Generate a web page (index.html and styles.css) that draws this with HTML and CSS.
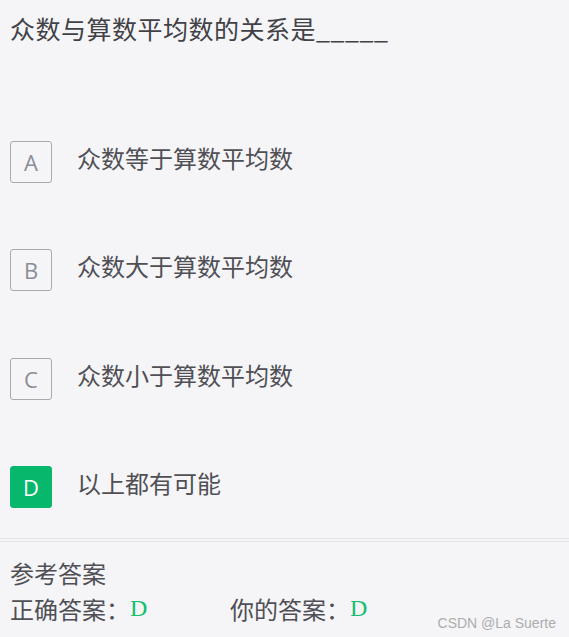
FILE: index.html
```html
<!DOCTYPE html>
<html>

<head>
    <meta charset="utf-8">
    <title>单选题</title>
    <link rel="stylesheet" href="styles.css">
</head>

<body>
    <div class="question">众数与算数平均数的关系是_____</div>

    <div class="options">
        <div class="option">
            <div class="option-key">A</div>
            <div class="option-text">众数等于算数平均数</div>
        </div>
        <div class="option">
            <div class="option-key">B</div>
            <div class="option-text">众数大于算数平均数</div>
        </div>
        <div class="option">
            <div class="option-key">C</div>
            <div class="option-text">众数小于算数平均数</div>
        </div>
        <div class="option">
            <div class="option-key selected">D</div>
            <div class="option-text">以上都有可能</div>
        </div>
    </div>

    <!-- Answer section -->
    <div class="answer">
        <div class="answer-title">参考答案</div>
        <div class="answer-row">
            <div class="answer-item">正确答案：<span class="answer-value">D</span></div>
            <div class="answer-item">你的答案：<span class="answer-value">D</span></div>
        </div>
    </div>

    <div class="watermark">CSDN @La Suerte</div>
</body>

</html>
```

FILE: styles.css
```css
body {
    margin: 0;
    padding: 10px 0 0 0;
    background: #f5f5f7;
    font-family: "Noto Sans CJK SC", "Noto Sans", sans-serif;
    color: #4a4a4f;
    width: 569px;
    height: 637px;
    box-sizing: border-box;
    overflow: hidden;
    position: relative;
}

.question {
    padding-left: 10px;
    font-size: 25px;
    line-height: 36px;
    letter-spacing: 0.5px;
    color: #414146;
}

.options {
    display: flex;
    flex-direction: column;
    gap: 66.3px;
    margin-top: 95px;
    padding-left: 10px;
}

.option {
    display: flex;
    align-items: flex-start;
}

.option-key {
    width: 42px;
    height: 42px;
    box-sizing: border-box;
    border: 1px solid #a8aab2;
    border-radius: 3px;
    display: flex;
    align-items: center;
    justify-content: center;
    font-family: "Open Sans", "Noto Sans", sans-serif;
    font-size: 22px;
    color: #8a8d96;
    flex-shrink: 0;
}

.option-key.selected {
    background: #07b86c;
    border-color: #07b86c;
    color: white;
}

.option-text {
    margin-left: 25px;
    font-size: 24px;
    line-height: 34px;
    color: #4f4f55;
}

/* Answer */
.answer {
    margin-top: 30px;
    border-top: 4px double #e2e2e8;
    padding: 13px 10px 0 10px;
    font-size: 24px;
    line-height: 36px;
    color: #4f4f55;
}

.answer-row {
    display: flex;
}

.answer-item {
    width: 220px;
}

.answer-value {
    font-family: "Liberation Serif", serif;
    font-size: 24px;
    color: #12bf6f;
    position: relative;
    top: -3px;
}

.watermark {
    position: absolute;
    right: 13px;
    bottom: 6px;
    font-family: "Liberation Sans", Arial, sans-serif;
    font-size: 14px;
    color: #acacac;
}
```
